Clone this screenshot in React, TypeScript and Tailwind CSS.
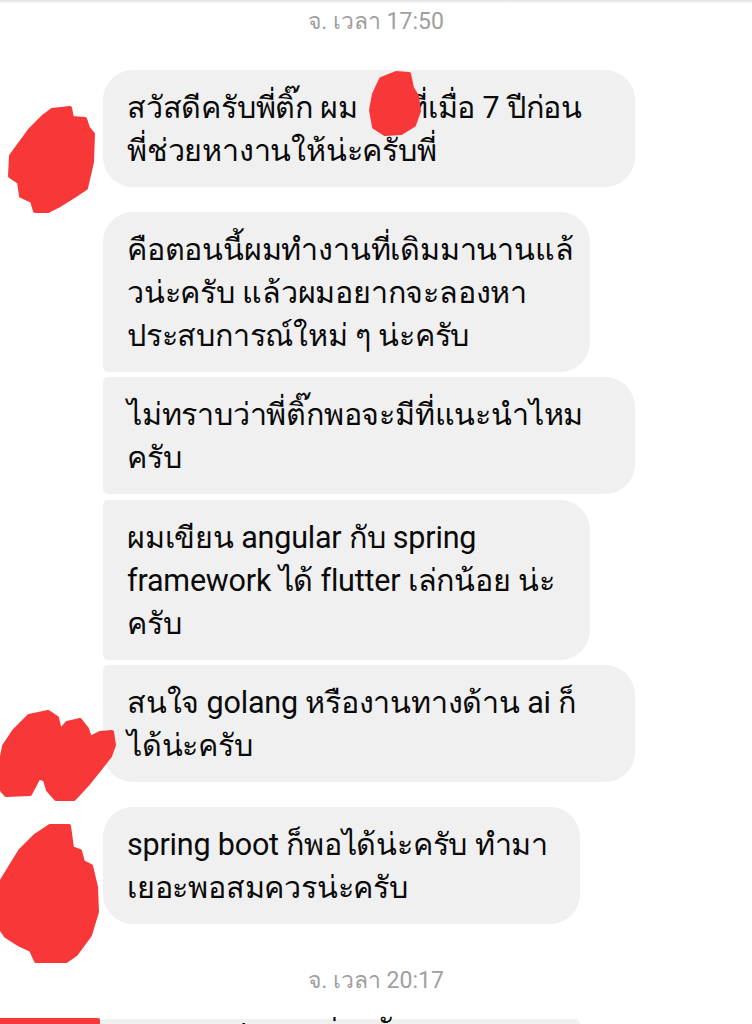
import React from "react";

type Msg = {
  lines: React.ReactNode[];
  width: string;
  corners: string;
  gapTop: string;
};

const messages: Msg[] = [
  {
    lines: [
      <>
        สวัสดีครับพี่ติ๊ก ผม<span className="inline-block w-[50px] pl-[18px]">ต</span>ที่เมื่อ 7 ปีก่อน
      </>,
      "พี่ช่วยหางานให้น่ะครับพี่",
    ],
    width: "w-[532px]",
    corners: "rounded-[30px]",
    gapTop: "mt-[34px]",
  },
  {
    lines: ["คือตอนนี้ผมทำงานที่เดิมมานานแล้", "วน่ะครับ แล้วผมอยากจะลองหา", "ประสบการณ์ใหม่ ๆ น่ะครับ"],
    width: "w-[487px]",
    corners: "rounded-[30px] rounded-bl-[5px]",
    gapTop: "mt-[25px]",
  },
  {
    lines: ["ไม่ทราบว่าพี่ติ๊กพอจะมีที่แนะนำไหม", "ครับ"],
    width: "w-[532px]",
    corners: "rounded-[30px] rounded-l-[5px]",
    gapTop: "mt-[5px]",
  },
  {
    lines: ["ผมเขียน angular กับ spring", "framework ได้ flutter เล่กน้อย น่ะ", "ครับ"],
    width: "w-[487px]",
    corners: "rounded-[30px] rounded-l-[5px]",
    gapTop: "mt-[6px]",
  },
  {
    lines: ["สนใจ golang หรืองานทางด้าน ai ก็", "ได้น่ะครับ"],
    width: "w-[532px]",
    corners: "rounded-[30px] rounded-tl-[5px]",
    gapTop: "mt-[5px]",
  },
  {
    lines: ["spring boot ก็พอได้น่ะครับ ทำมา", "เยอะพอสมควรน่ะครับ"],
    width: "w-[477px]",
    corners: "rounded-[30px]",
    gapTop: "mt-[25px]",
  },
];

function Bubble({ msg }: { msg: Msg }) {
  return (
    <div className={`flex pl-[103px] ${msg.gapTop}`}>
      <div className={`${msg.width} ${msg.corners} bg-[#f0f0f0] px-[24px] py-[15.5px]`}>
        {msg.lines.map((line, i) => (
          <p key={i} className="whitespace-nowrap text-[30.5px] leading-[43px] tracking-[-0.2px] text-[#0a0a0a]">
            {line}
          </p>
        ))}
      </div>
    </div>
  );
}

function Scribbles() {
  return (
    <svg
      className="pointer-events-none absolute left-0 top-0"
      width="752"
      height="1024"
      viewBox="0 0 752 1024"
      fill="#f83838"
      stroke="#f83838"
      strokeWidth="4"
      strokeLinejoin="round"
    >
      <path d="M52 110 L70 108 L72 118 L85 119 L88 128 L93 134 L92 162 L86 188 L74 196 L58 206 L48 211 L35 211 L32 201 L21 196 L19 182 L10 176 L11 156 L30 130 L44 116 Z" />
      <path d="M381 79 L396 73 L409 74 L412 88 L417 96 L419 111 L414 125 L401 133 L385 134 L374 127 L371 110 L374 94 Z" />
      <path d="M4 746 L14 731 L29 716 L48 712 L57 718 L60 731 L67 723 L80 720 L87 729 L90 738 L100 733 L112 732 L114 745 L110 756 L99 770 L87 785 L74 799 L56 799 L48 790 L45 780 L39 777 L30 794 L6 795 L1 789 L1 762 Z" />
      <path d="M50 826 L69 826 L72 848 L80 851 L83 862 L91 866 L96 887 L97 912 L90 935 L76 954 L66 961 L36 961 L31 950 L20 945 L6 936 L1 929 L1 882 L20 851 L35 836 Z" />
      <rect x="0" y="1020" width="98" height="6" />
    </svg>
  );
}

export default function App() {
  return (
    <div
      className="relative h-[1024px] w-[752px] overflow-hidden bg-white"
      style={{ fontFamily: "Roboto, 'Noto Sans', sans-serif" }}
    >
      <div className="h-[3px] bg-gradient-to-b from-[#e2e2e2] to-[#f7f7f7]" />
      <p className="mt-[5px] text-center text-[23px] leading-[28px] text-[#a0a0a0]">จ. เวลา 17:50</p>

      {messages.map((m, i) => (
        <Bubble key={i} msg={m} />
      ))}

      <p className="mt-[43px] text-center text-[23px] leading-[28px] text-[#a0a0a0]">จ. เวลา 20:17</p>

      <div className="mt-[24px] flex pl-[100px]">
        <div className="h-[60px] w-[480px] rounded-t-[5px] bg-[#f0f0f0] px-[27px]">
          <p className="-mt-[10px] whitespace-nowrap text-[30.5px] leading-[43px] text-[#0a0a0a]">เยอะพอสมควรน่ะครับ</p>
        </div>
      </div>

      <Scribbles />
    </div>
  );
}
